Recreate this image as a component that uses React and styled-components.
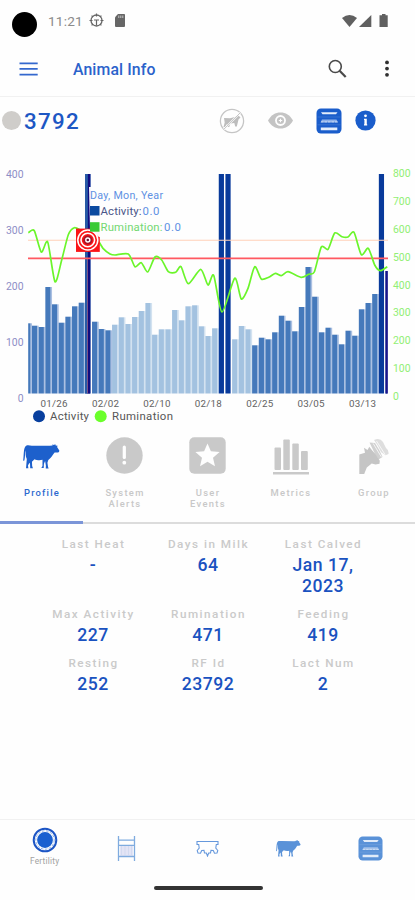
import styled, { createGlobalStyle } from 'styled-components'

const GlobalStyle = createGlobalStyle`
  * {
    box-sizing: border-box;
  }
  body {
    margin: 0;
    background: #fefefe;
    font-family: Roboto, 'Noto Sans', sans-serif;
  }
`

const Screen = styled.div`
  display: flex;
  flex-direction: column;
  width: 415px;
  height: 900px;
  overflow: hidden;
  background: #fefefe;
`

//Top of the screen
const StatusBar = styled.div`
  display: flex;
  align-items: center;
  height: 41px;
  padding: 0 26px 0 12px;
`

const Camera = styled.div`
  width: 25px;
  height: 25px;
  margin-top: 8px;
  border-radius: 50%;
  background: #000;
`

const Clock = styled.span`
  width: 35px;
  margin: 0 6px 0 11px;
  font-size: 13.6px;
  letter-spacing: 0.2px;
  color: #8b8b8b;
`

const StatusIcons = styled.div`
  display: flex;
  align-items: center;
  gap: ${props => props.gap};
  margin-left: ${props => props.push ? 'auto' : '0'};
`

const AppBar = styled.header`
  display: flex;
  align-items: center;
  height: 56px;
  padding: 0 25px 0 19px;
  border-bottom: 1px solid #f1f1f1;
`

const Title = styled.h1`
  flex: 1;
  margin: 1px 0 0 35px;
  font-size: 15.8px;
  font-weight: 500;
  letter-spacing: 0.12px;
  color: #2b62cb;
`

const AnimalRow = styled.div`
  display: flex;
  align-items: center;
  height: 47px;
  padding: 0 39px 0 2px;
`

const Dot = styled.div`
  width: 19px;
  height: 19px;
  border-radius: 50%;
  background: #cfcdca;
`

const AnimalId = styled.span`
  flex: 1;
  margin: 1px 0 0 3px;
  font-size: 22.3px;
  font-weight: 500;
  letter-spacing: 1.3px;
  color: #1d57c4;
`

const AnimalIcons = styled.div`
  display: flex;
  align-items: center;
`

const IconSlot = styled.div`
  display: flex;
  margin-left: ${props => props.left || 0}px;
`

const Chart = styled.svg`
  display: block;
  flex: none;
  margin-top: 6px;
`

//Tabs
const Tabs = styled.nav`
  display: grid;
  grid-template-columns: repeat(5, 1fr);
  flex: none;
  height: 99px;
`

const Tab = styled.div`
  display: flex;
  flex-direction: column;
  align-items: center;
  padding-top: 9px;
  border-bottom: ${props => props.active ? '3px solid #7b95d8' : '2px solid #dcdcdc'};
  color: ${props => props.active ? '#2c69cf' : '#c8c8c8'};
`

const TabIcon = styled.div`
  display: flex;
  align-items: center;
  justify-content: center;
  height: 42px;
  padding-top: ${props => props.drop || 0}px;
`

const TabLabel = styled.span`
  width: 58px;
  margin-top: 11px;
  padding-left: 1px;
  text-align: center;
  font-size: 9.4px;
  line-height: 11px;
  font-weight: 500;
  letter-spacing: ${props => props.active ? 1.2 : 1.3}px;
`

//Profile values
const Stats = styled.div`
  display: grid;
  grid-template-columns: repeat(3, 115px);
  grid-template-rows: 70px 49px 49px;
  justify-content: center;
  flex: 1;
  padding: 13px 0 0 1px;
`

const Stat = styled.div`
  display: flex;
  flex-direction: column;
  align-items: center;
`

const StatLabel = styled.span`
  padding-left: 1px;
  font-size: 11.7px;
  line-height: 14px;
  font-weight: 500;
  letter-spacing: 1.5px;
  white-space: nowrap;
  color: #cacaca;
`

const StatValue = styled.span`
  width: 76px;
  margin-top: 3.5px;
  text-align: center;
  font-size: 17.6px;
  line-height: 21px;
  font-weight: 500;
  letter-spacing: 0.5px;
  color: #1a52c0;
`

//Bottom
const BottomNav = styled.nav`
  display: grid;
  grid-template-columns: repeat(5, 81.4px);
  justify-content: center;
  height: 67px;
  border-top: 1px solid #f1f1f1;
`

const NavItem = styled.div`
  display: flex;
  flex-direction: column;
  align-items: center;
  justify-content: ${props => props.active ? 'flex-start' : 'center'};
  height: 56px;
  padding-top: ${props => props.active ? 7 : 1}px;
`

const NavLabel = styled.span`
  margin-top: 3px;
  font-size: 8.3px;
  line-height: 10px;
  letter-spacing: 0.25px;
  color: #a2a2a2;
`

const GestureArea = styled.div`
  display: flex;
  justify-content: center;
  height: 14px;
`

const GestureBar = styled.div`
  width: 109px;
  height: 4px;
  margin-left: 1px;
  border-radius: 2px;
  background: #333;
`

const bars = [
  70.2, 67.8, 66.5, 106.5, 89.2, 70.8, 76.8, 87.2, 90.8, 219.5, 71.8, 64.5, 63.2, 68.8,
  76.2, 69.5, 76.5, 82.5, 90.5, 58.8, 64.2, 64.2, 83.5, 73.2, 87.2, 88.2, 67.2, 57.5,
  65.2, 219.5, 219.5, 54.2, 67.5, 64.2, 48.2, 55.8, 54.2, 61.2, 77.8, 72.8, 62.2, 86.5,
  126.5, 96.8, 61.2, 65.8, 58.8, 49.2, 62.8, 57.8, 84.2, 90.5, 99.5, 219.5, 122.5,
]

const rumination = [
  [28.3, 82.7], [34.3, 80.7], [41.3, 102], [47.7, 92], [55, 131.7], [61.7, 110], [68.3, 84.7],
  [74.3, 77.7], [80, 80], [87.7, 86], [98, 91], [103, 98.3], [110, 104], [115, 105],
  [128.3, 104], [135, 116.7], [141.3, 112.7], [147.7, 122], [155, 107], [161.7, 110],
  [168.3, 121.7], [175.7, 122.3], [181, 116.7], [188.3, 133.7], [200.7, 119.3], [208, 135],
  [213.7, 125.3], [222, 162], [234.7, 128.3], [241.3, 149], [248, 138.3], [254.7, 116.7],
  [261.3, 129], [268.7, 127.3], [275.3, 123.3], [281.3, 125.7], [288, 121.7], [301, 127.3],
  [308.7, 124.3], [314.3, 122], [321.3, 97], [328, 99.3], [334.7, 83], [342, 86.7], [348, 87],
  [354, 82.3], [361.3, 104.7], [368.3, 98.3], [374.7, 115], [380.3, 120.7], [387.3, 116.7],
]

const dates = ['01/26', '02/02', '02/10', '02/18', '02/25', '03/05', '03/13']

const stats = [
  ['Last Heat', '-'], ['Days in Milk', '64'], ['Last Calved', 'Jan 17, 2023'],
  ['Max Activity', '227'], ['Rumination', '471'], ['Feeding', '419'],
  ['Resting', '252'], ['RF Id', '23792'], ['Lact Num', '2'],
]

function smooth(pts) {
  let d = `M${pts[0]}`
  for (let i = 0; i < pts.length - 1; i++) {
    const p0 = pts[i - 1] || pts[i]
    const p1 = pts[i]
    const p2 = pts[i + 1]
    const p3 = pts[i + 2] || p2
    d += `C${p1[0] + (p2[0] - p0[0]) / 8},${p1[1] + (p2[1] - p0[1]) / 8} ${p2[0] - (p3[0] - p1[0]) / 8},${p2[1] - (p3[1] - p1[1]) / 8} ${p2[0]},${p2[1]}`
  }
  return d
}

function Cow({ width, height, color }) {
  return (
    <svg width={width} height={height} viewBox="0 0 38 26">
      <path fill={color} d="M3.2 1.8 C5 1 7 1.6 9 1.7 L27.5 1.9 L30.4 1.6 L30 .5 L32 1 L33 0 L33.6 1.5 L35.6 1.8 L35 3.2 L37.3 6.6 C37.5 8 36.5 8.8 34.8 8.7 L32.5 8.8 C31 10 30.3 12.8 28.2 14.4 L26 16.5 L25.1 19.3 L25.7 23.5 L26.3 25.2 L23.4 25.2 L23.5 22 L22.7 17.5 L21.5 20.2 L21.3 24.6 L18.8 24.6 L20 22.5 L20 16.3 C17 17.1 14 16.6 11.8 15.6 L9.2 18.2 L9.4 22.5 L10.2 25 L7.4 25 L7.2 20.4 L6.6 19.2 L5.1 22.2 L5.5 25 L3.1 25 L3.5 20 L3.9 15.5 C2.2 12.5 3 9.5 2.6 6.5 C1.9 9.5 2.3 13.5 1.4 16.9 L.1 17.2 C1.1 12 .1 4 3.2 1.8Z" />
    </svg>
  )
}

function Feeder({ size, color, stripe, soft }) {
  return (
    <svg width={size} height={size} viewBox="0 0 26 26">
      <rect x=".5" y=".5" width="25" height="25" rx="4.5" fill={color} />
      <path d="M5 4.2H21.5L20 6.3H6.5Z M4.8 19.6H21.3V22.2H4.8Z" fill={stripe} />
      <path d="M1.5 9H24.5M1.5 16.8H24.5" stroke={soft} strokeWidth=".6" opacity=".4" />
      <path d="M4.5 14.5L6 11.6H20.5L22 14.5Z" fill={soft} />
      <path d="M5 13.9H21.5" stroke={stripe} strokeWidth=".7" strokeDasharray="2.5 1" />
    </svg>
  )
}

function ActivityChart() {
  const base = 243.5
  const barColor = (h, i) => {
    if (h > 200 || i === 54) return '#083a9b'
    return i > 12 && i < 34 ? '#a3c2e0' : '#4579bb'
  }
  return (
    <Chart width="415" height="275" viewBox="0 0 415 275" fontFamily="Roboto, sans-serif">
      {bars.map((h, i) => {
        const x = i === 0 ? 28.2 : 32 + (i - 1) * 6.67
        const full = h > 200
        const light = i > 12 && i < 34
        const w = i === 0 ? 2.3 : i === 54 ? 2 : 5.2
        return (
          <g key={i}>
            {!full && i < 54 && (
              <rect x={x + w} y={base - h} width="1.5" height={h} fill={light ? '#d3e2f0' : '#abc0e2'} />
            )}
            <rect x={x} y={base - h} width={w} height={h} fill={barColor(h, i)} />
          </g>
        )
      })}
      <rect x="87.8" y="24" width="2.4" height="219.5" fill="#100b80" />
      <rect x="85" y="24" width="2.8" height="219.5" fill="#285aa5" />
      <rect x="87.1" y="108" width=".9" height="135.5" fill="#8b5685" />
      <rect x="385.5" y="121" width="2.2" height="122.5" fill="#1b128b" />

      <path d="M28 90.3H388" stroke="#ffd0b8" strokeWidth="1.1" />
      <path d="M28 108.4H388" stroke="#ff5961" strokeWidth="1.9" />
      <path d={smooth(rumination)} fill="none" stroke="#6bf52b" strokeWidth="1.7" />

      {/* heat alert marker */}
      <rect x="76" y="78.6" width="23.8" height="23.3" fill="#fb1518" />
      <circle cx="87.8" cy="90" r="10" fill="none" stroke="#fff" strokeWidth="1.5" />
      <circle cx="87.8" cy="90" r="6.8" fill="none" stroke="#fff" strokeWidth="1.6" />
      <circle cx="87.8" cy="90" r="3.6" fill="#fff" stroke="#a81428" strokeWidth="1.8" />
      <circle cx="87.8" cy="90" r="1.3" fill="#6d1239" />

      {/* tooltip */}
      <path d="M89 37H184V87H99L90 80Z" fill="#fefefe" fillOpacity=".95" />
      <text x="90" y="49" fontSize="10.7" textLength="73" fill="#5f91e3">Day, Mon, Year</text>
      <rect x="90" y="56" width="9.5" height="9.5" fill="#0b4aa0" />
      <text x="100.5" y="65" fontSize="11.4" textLength="41" fill="#4b5589">Activity:</text>
      <text x="142.5" y="65" fontSize="11.4" textLength="17" fill="#5f91e3">0.0</text>
      <rect x="90" y="72.2" width="9.5" height="9.5" fill="#39ca35" />
      <text x="100.5" y="81.3" fontSize="11.4" textLength="62" fill="#74d873">Rumination:</text>
      <text x="164" y="81.3" fontSize="11.4" textLength="17" fill="#5f91e3">0.0</text>

      {[400, 300, 200, 100, 0].map((n, i) => (
        <text key={n} x="23.5" y={27.8 + i * 56} fontSize="10.4" textAnchor="end" fill="#8e8ec6">{n}</text>
      ))}
      {[800, 700, 600, 500, 400, 300, 200, 100, 0].map((n, i) => (
        <text key={n} x="393" y={27.3 + i * 27.8} fontSize="10.4" fill="#91ef74">{n}</text>
      ))}
      {dates.map((d, i) => (
        <text key={d} x={54.2 + i * 51.4} y="257" fontSize="9.8" letterSpacing=".25" textAnchor="middle" fill="#626262">{d}</text>
      ))}

      <circle cx="39" cy="266.2" r="6" fill="#083f9e" />
      <text x="50" y="270.2" fontSize="11.4" textLength="39" fill="#565656">Activity</text>
      <circle cx="100.7" cy="266.2" r="6" fill="#6bff2b" />
      <text x="112" y="270.2" fontSize="11.4" textLength="61" fill="#565656">Rumination</text>
    </Chart>
  )
}

export default function AnimalInfo() {
  return (
    <Screen>
      <GlobalStyle />
      <StatusBar>
        <Camera />
        <Clock>11:21</Clock>
        <StatusIcons gap="10px">
          <svg width="15" height="15" viewBox="0 0 15 15" fill="none" stroke="#666">
            <circle cx="7.5" cy="7.5" r="5.5" strokeWidth="1.3" />
            <path d="M7.5 .5V3.5M7.5 7V12.5M.5 7.5H3.5M11.5 7.5H14.5M5 7H10M2.6 2.6L4 4M12.4 2.6L11 4M2.6 12.4L4 11M12.4 12.4L11 11" strokeWidth="1.2" />
          </svg>
          <svg width="12" height="13" viewBox="0 0 12 13">
            <path d="M4 0H10.2Q11 0 11 1V12Q11 13 10 13H2Q1 13 1 12V3.2Z" fill="#666" />
            <path d="M4.8 1.5V4M6.8 1.5V4M8.8 1.5V4" stroke="#ddd" strokeWidth=".8" />
          </svg>
        </StatusIcons>
        <StatusIcons gap="2px" push>
          <svg width="15" height="12" viewBox="0 0 15 12">
            <path d="M0 3Q7.5-3 15 3L7.5 12Z" fill="#606060" />
          </svg>
          <svg width="13" height="12" viewBox="0 0 13 12">
            <path d="M0 12L12.3 0V12Z" fill="#606060" />
          </svg>
          <svg width="15" height="13" viewBox="0 0 15 13">
            <path d="M5.5 1.2H8V0H11.5V1.2H13.7V13H5.5Z" fill="#606060" />
          </svg>
        </StatusIcons>
      </StatusBar>

      <AppBar>
        <svg width="19" height="14" viewBox="0 0 19 14">
          <path d="M.5 1.3H18.7M.5 6.9H18.7M.5 12.6H18.7" stroke="#3468ce" strokeWidth="1.8" />
        </svg>
        <Title>Animal Info</Title>
        <IconSlot>
          <svg width="19" height="20" viewBox="0 0 19 20" fill="none" stroke="#4a4a4a">
            <circle cx="7.3" cy="7.5" r="6" strokeWidth="1.6" />
            <path d="M11.6 11.8L17.7 18" strokeWidth="2.2" />
          </svg>
        </IconSlot>
        <IconSlot left="37">
          <svg width="6" height="18" viewBox="0 0 6 18" fill="#303030">
            <circle cx="3" cy="2.4" r="1.9" />
            <circle cx="3" cy="8.6" r="1.9" />
            <circle cx="3" cy="14.8" r="1.9" />
          </svg>
        </IconSlot>
      </AppBar>

      <AnimalRow>
        <Dot />
        <AnimalId>3792</AnimalId>
        <AnimalIcons>
          <IconSlot>
            <svg width="26" height="26" viewBox="0 0 26 26">
              <circle cx="13" cy="13" r="11.6" fill="none" stroke="#c5c5c5" strokeWidth="1.3" />
              <path d="M5 10L11 10.3L16 9L19 7L21.5 9.5L19.5 11.5L18.8 14.5L17.8 18.5H16.2L15.3 15L11.5 15.6L10.2 19H8.5L8 16L6 19H4.5L5.7 14.5Z" fill="#bdbdbd" />
              <path d="M21.3 4.7L4.8 21.3" stroke="#fefefe" strokeWidth="1.8" />
              <path d="M21.3 4.7L4.8 21.3" stroke="#c5c5c5" strokeWidth="1" />
            </svg>
          </IconSlot>
          <IconSlot left="23">
            <svg width="25" height="17" viewBox="0 0 25 17">
              <path d="M0 8.5C3 3 7.4.4 12.5.4S22 3 25 8.5C22 14 17.6 16.6 12.5 16.6S3 14 0 8.5Z" fill="#c4c4c4" />
              <circle cx="12.5" cy="8.5" r="5.4" fill="#fefefe" />
              <circle cx="12.5" cy="8.5" r="3.6" fill="#c4c4c4" />
              <path d="M12.5 6.8V10.2M10.8 8.5H14.2" stroke="#fefefe" strokeWidth="1.1" />
            </svg>
          </IconSlot>
          <IconSlot left="23">
            <Feeder size={26} color="#1a5dcb" stripe="#e3edfb" soft="#8fb1e8" />
          </IconSlot>
          <IconSlot left="13">
            <svg width="21" height="21" viewBox="0 0 21 21">
              <circle cx="10.5" cy="10.5" r="10.1" fill="#1a5dcb" />
              <circle cx="10.5" cy="5.8" r="1.4" fill="#fff" />
              <path d="M9 8.7H11.8V14.3H12.2V15.6H9V14.3H9.4V10H9Z" fill="#fff" />
            </svg>
          </IconSlot>
        </AnimalIcons>
      </AnimalRow>

      <ActivityChart />

      <Tabs>
        <Tab active>
          <TabIcon drop={3}>
            <Cow width={37} height={25.3} color="#1d60cc" />
          </TabIcon>
          <TabLabel active>Profile</TabLabel>
        </Tab>
        <Tab>
          <TabIcon>
            <svg width="37" height="37" viewBox="0 0 37 37">
              <circle cx="18.5" cy="18.5" r="18.2" fill="#c9c9c9" />
              <path d="M18.3 10V20.5" stroke="#fefefe" strokeWidth="3.2" strokeLinecap="round" />
              <circle cx="18.3" cy="25.7" r="1.9" fill="#fefefe" />
            </svg>
          </TabIcon>
          <TabLabel>System Alerts</TabLabel>
        </Tab>
        <Tab>
          <TabIcon>
            <svg width="37" height="37" viewBox="0 0 37 37">
              <rect x=".3" y=".3" width="36.4" height="36.4" rx="5" fill="#c9c9c9" />
              <path d="M18.5 6.5L21.9 14.2L30.6 15L24 20.7L26 29.2L18.5 24.7L11 29.2L13 20.7L6.4 15L15.1 14.2Z" fill="#fefefe" />
            </svg>
          </TabIcon>
          <TabLabel>User Events</TabLabel>
        </Tab>
        <Tab>
          <TabIcon drop={4}>
            <svg width="36" height="36" viewBox="0 0 36 36" fill="#c9c9c9">
              <rect x="1.5" y="8.5" width="6.5" height="22.5" rx="1" />
              <rect x="10.3" y=".5" width="6.5" height="30.5" rx="1" />
              <rect x="19.3" y="4.5" width="6.5" height="26.5" rx="1" />
              <rect x="28" y="12" width="6.8" height="19" rx="1" />
              <rect x="0" y="33" width="36" height="2.5" />
            </svg>
          </TabIcon>
          <TabLabel>Metrics</TabLabel>
        </Tab>
        <Tab>
          <TabIcon drop={3}>
            <svg width="32" height="37" viewBox="0 0 32 37">
              <path d="M16 2Q22-.5 25 4L28 10Q31 12 30.5 16L27.5 17.2L23 14L20 8Z" fill="#dedede" />
              <path d="M11.5 4.5L17 5L21.5 12.5L24.5 19L20.5 21.5L17 16Z" fill="#d1d1d1" />
              <path d="M15.2 5.5L23.3 18.8M18.5 3L27 16.5" stroke="#fefefe" strokeWidth=".8" fill="none" />
              <path d="M1.3 16.5L7 14.8L6 9.8L9.5 12L11.3 8.8L14.2 12.5L17.8 16.5L21.8 22.8L21.5 25.7L17.5 26.5L13.7 25.5L8.8 29.5L6.2 36H1.3Z" fill="#c5c5c5" />
            </svg>
          </TabIcon>
          <TabLabel>Group</TabLabel>
        </Tab>
      </Tabs>

      <Stats>
        {stats.map(([label, value]) => (
          <Stat key={label}>
            <StatLabel>{label}</StatLabel>
            <StatValue>{value}</StatValue>
          </Stat>
        ))}
      </Stats>

      <BottomNav>
        <NavItem active>
          <svg width="26" height="26" viewBox="0 0 26 26" fill="none">
            <circle cx="13" cy="13" r="11.3" stroke="#1c55c5" strokeWidth="2" />
            <circle cx="13" cy="13" r="9.2" stroke="#8fb1e8" strokeWidth="1" strokeDasharray="2.5 1.5" />
            <circle cx="13" cy="13" r="7.9" fill="#1a60d0" />
          </svg>
          <NavLabel>Fertility</NavLabel>
        </NavItem>
        <NavItem>
          <svg width="19" height="25" viewBox="0 0 19 25" fill="none" stroke="#7fabdf">
            <rect x="3" y="10" width="13" height="10" fill="#e3e4f5" stroke="none" />
            <path d="M1.5 0V25M17.5 0V25M1.5 4.2H17.5M1.5 9.3H17.5M1.5 20.5H17.5" strokeWidth="1.3" />
            <path d="M4.5 10V20M8 10V20M11.5 10V20M14.5 10V20" stroke="#ccd6ee" strokeWidth=".7" />
          </svg>
        </NavItem>
        <NavItem>
          <svg width="23" height="17" viewBox="0 0 23 17" fill="none" stroke="#6698dc" strokeWidth="1.1">
            <path d="M1 1.5H22V4.5H20.3L19.8 8L21.8 10.5L21 13L18.5 13.2L17.3 10.5L15 10.3L14.5 13L12.7 13L11.5 16L10.3 13L8.5 13L8 10.3L5.7 10.5L4.5 13.2L2 13L1.2 10.5L3.2 8L2.7 4.5H1Z" />
          </svg>
        </NavItem>
        <NavItem>
          <Cow width={25} height={17.1} color="#5a92d8" />
        </NavItem>
        <NavItem>
          <Feeder size={25} color="#5a92d8" stripe="#e0ebf9" soft="#a3c1ea" />
        </NavItem>
      </BottomNav>
      <GestureArea>
        <GestureBar />
      </GestureArea>
    </Screen>
  )
}
